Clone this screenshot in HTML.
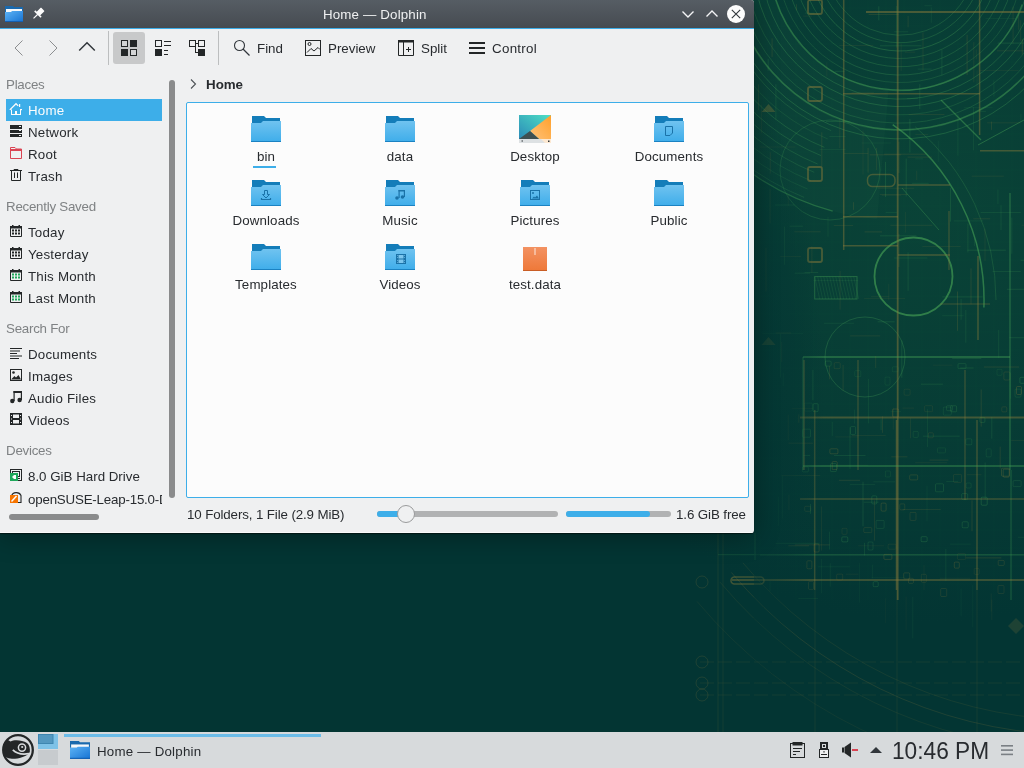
<!DOCTYPE html>
<html><head><meta charset="utf-8">
<style>
*{box-sizing:border-box}
html,body{margin:0;padding:0}
body{width:1024px;height:768px;overflow:hidden;position:relative;background:#033533;font-family:"Liberation Sans",sans-serif;}
.a{position:absolute}
.t{position:absolute;font-family:"Liberation Sans",sans-serif;font-size:13.333px;line-height:16px;white-space:nowrap;color:#282b2f;will-change:transform}
svg{position:absolute;overflow:visible}
#win{position:absolute;left:0;top:0;width:754px;height:533px;background:#eff0f1;border-radius:0 3px 3px 0;overflow:hidden;box-shadow:0 1px 1px rgba(0,0,0,0.5),0 4px 26px rgba(0,0,0,0.32)}
.si{letter-spacing:0.2px}
#title{position:absolute;left:0;top:0;width:754px;height:28px;background:linear-gradient(#565d64,#464b51)}
.hdr{color:#7f8284;letter-spacing:-0.25px;margin-top:0.5px}
.lbl{text-align:center;width:130px;letter-spacing:0.12px}
</style></head><body>
<!-- WALLPAPER -->
<svg id="wp" width="1024" height="732" style="left:0;top:0;position:absolute" viewBox="0 0 1024 732">
<defs><radialGradient id="wpg" cx="930" cy="200" r="470" gradientUnits="userSpaceOnUse">
<stop offset="0" stop-color="#0a4337"/><stop offset="0.5" stop-color="#073c35"/><stop offset="0.9" stop-color="#033533"/></radialGradient></defs>
<rect width="1024" height="732" fill="url(#wpg)"/>
<path d="M888.7,89.5 L877.3,219.0 A260,260 0 0 1 641.0,-17.3 L770.5,-28.7 A130,130 0 0 0 888.7,89.5 Z" fill="#4aa55a" opacity="0.05"/>
<path d="M974.7,-33.5 A75,75 0 0 1 825.0,-37.4" fill="none" stroke="#45a055" stroke-width="0.8" opacity="0.34"/>
<path d="M982.7,-32.8 A83,83 0 0 1 817.1,-37.1" fill="none" stroke="#45a055" stroke-width="0.8" opacity="0.36"/>
<path d="M990.7,-32.1 A91,91 0 0 1 809.1,-36.8" fill="none" stroke="#45a055" stroke-width="0.8" opacity="0.43"/>
<path d="M998.6,-31.4 A99,99 0 0 1 801.1,-36.5" fill="none" stroke="#45a055" stroke-width="0.8" opacity="0.34"/>
<path d="M1006.6,-30.7 A107,107 0 0 1 793.1,-36.3" fill="none" stroke="#45a055" stroke-width="0.8" opacity="0.35"/>
<path d="M1014.6,-30.0 A115,115 0 0 1 785.1,-36.0" fill="none" stroke="#45a055" stroke-width="0.8" opacity="0.37"/>
<path d="M1022.5,-29.3 A123,123 0 0 1 777.1,-35.7" fill="none" stroke="#45a055" stroke-width="0.8" opacity="0.29"/>
<path d="M1030.5,-28.6 A131,131 0 0 1 769.1,-35.4" fill="none" stroke="#45a055" stroke-width="0.8" opacity="0.35"/>
<path d="M1038.5,-27.9 A139,139 0 0 1 761.1,-35.1" fill="none" stroke="#45a055" stroke-width="0.8" opacity="0.38"/>
<path d="M1046.4,-27.2 A147,147 0 0 1 753.1,-34.9" fill="none" stroke="#45a055" stroke-width="0.8" opacity="0.41"/>
<path d="M1054.4,-26.5 A155,155 0 0 1 745.1,-34.6" fill="none" stroke="#45a055" stroke-width="0.8" opacity="0.27"/>
<path d="M1062.4,-25.8 A163,163 0 0 1 737.1,-34.3" fill="none" stroke="#45a055" stroke-width="0.8" opacity="0.31"/>
<path d="M1070.3,-25.1 A171,171 0 0 1 729.1,-34.0" fill="none" stroke="#45a055" stroke-width="0.8" opacity="0.27"/>
<path d="M1078.3,-24.4 A179,179 0 0 1 721.1,-33.8" fill="none" stroke="#45a055" stroke-width="0.8" opacity="0.41"/>
<path d="M831.1,130.6 A184,184 0 0 1 716.1,-33.6" fill="none" stroke="#45a055" stroke-width="0.8" opacity="0.30"/>
<path d="M827.7,138.9 A193,193 0 0 1 707.1,-33.3" fill="none" stroke="#45a055" stroke-width="0.8" opacity="0.21"/>
<path d="M824.3,147.3 A202,202 0 0 1 698.1,-33.0" fill="none" stroke="#45a055" stroke-width="0.8" opacity="0.35"/>
<path d="M821.0,155.6 A211,211 0 0 1 689.1,-32.6" fill="none" stroke="#45a055" stroke-width="0.8" opacity="0.34"/>
<path d="M817.6,164.0 A220,220 0 0 1 680.1,-32.3" fill="none" stroke="#45a055" stroke-width="0.8" opacity="0.30"/>
<path d="M814.2,172.3 A229,229 0 0 1 671.1,-32.0" fill="none" stroke="#45a055" stroke-width="0.8" opacity="0.29"/>
<path d="M810.8,180.7 A238,238 0 0 1 662.1,-31.7" fill="none" stroke="#45a055" stroke-width="0.8" opacity="0.22"/>
<path d="M807.5,189.0 A247,247 0 0 1 653.2,-31.4" fill="none" stroke="#45a055" stroke-width="0.8" opacity="0.20"/>
<path d="M804.1,197.4 A256,256 0 0 1 644.2,-31.1" fill="none" stroke="#45a055" stroke-width="0.8" opacity="0.28"/>
<path d="M1022.2,4.5 A130,130 0 0 1 770.1,-35.5" fill="none" stroke="#45a055" stroke-width="1.3" opacity="0.50"/>
<path d="M1059.7,18.1 A170,170 0 0 1 730.1,-34.1" fill="none" stroke="#45a055" stroke-width="1.3" opacity="0.50"/>
<path d="M832.7,211.1 A260,260 0 0 1 640.2,-30.9" fill="none" stroke="#45a055" stroke-width="1.3" opacity="0.45"/>
<path d="M892.7,124.7 A214,214 0 0 1 983.9,307.5" fill="none" stroke="#45a055" stroke-width="1.5" opacity="0.60"/>
<path d="M915.3,126.9 A226,226 0 0 1 996.0,300.0" fill="none" stroke="#45a055" stroke-width="0.8" opacity="0.30"/>
<circle cx="913.5" cy="276.5" r="39" fill="none" stroke="#45a055" stroke-width="1.8" opacity="0.65"/>
<circle cx="865" cy="357" r="40" fill="none" stroke="#45a055" stroke-width="1" opacity="0.30"/>
<circle cx="830" cy="170" r="50" fill="none" stroke="#45a055" stroke-width="1" opacity="0.25"/>
<line x1="843.7" y1="0.0" x2="843.7" y2="250.0" stroke="#8a7a3a" stroke-width="1.5" opacity="0.45"/>
<line x1="897.7" y1="0.0" x2="897.7" y2="600.0" stroke="#8a7a3a" stroke-width="1.8" opacity="0.50"/>
<line x1="979.6" y1="0.0" x2="979.6" y2="135.0" stroke="#8a7a3a" stroke-width="1.5" opacity="0.45"/>
<line x1="978.0" y1="256.0" x2="978.0" y2="340.0" stroke="#8a7a3a" stroke-width="1.5" opacity="0.45"/>
<line x1="949.0" y1="211.0" x2="949.0" y2="270.0" stroke="#8a7a3a" stroke-width="1.2" opacity="0.40"/>
<line x1="804.0" y1="360.0" x2="804.0" y2="470.0" stroke="#8a7a3a" stroke-width="1.5" opacity="0.45"/>
<line x1="814.7" y1="410.0" x2="814.7" y2="590.0" stroke="#8a7a3a" stroke-width="1.5" opacity="0.35"/>
<line x1="858.0" y1="360.0" x2="858.0" y2="470.0" stroke="#8a7a3a" stroke-width="1.2" opacity="0.40"/>
<line x1="896.5" y1="420.0" x2="896.5" y2="590.0" stroke="#8a7a3a" stroke-width="1.5" opacity="0.45"/>
<line x1="965.0" y1="370.0" x2="965.0" y2="500.0" stroke="#8a7a3a" stroke-width="1.2" opacity="0.40"/>
<line x1="977.0" y1="420.0" x2="977.0" y2="590.0" stroke="#8a7a3a" stroke-width="1.5" opacity="0.40"/>
<line x1="815.0" y1="590.0" x2="815.0" y2="732.0" stroke="#8a7a3a" stroke-width="1" opacity="0.12"/>
<line x1="897.0" y1="590.0" x2="897.0" y2="732.0" stroke="#8a7a3a" stroke-width="1" opacity="0.12"/>
<line x1="977.0" y1="590.0" x2="977.0" y2="732.0" stroke="#8a7a3a" stroke-width="1" opacity="0.12"/>
<line x1="1010.0" y1="193.0" x2="1010.0" y2="470.0" stroke="#45a055" stroke-width="1.3" opacity="0.45"/>
<line x1="803.0" y1="357.0" x2="803.0" y2="470.0" stroke="#45a055" stroke-width="1.3" opacity="0.35"/>
<line x1="1011.0" y1="470.0" x2="1011.0" y2="600.0" stroke="#45a055" stroke-width="1.3" opacity="0.30"/>
<line x1="866.0" y1="11.9" x2="1024.0" y2="11.9" stroke="#8a7a3a" stroke-width="2" opacity="0.50"/>
<line x1="843.0" y1="93.7" x2="980.0" y2="93.7" stroke="#8a7a3a" stroke-width="1.5" opacity="0.45"/>
<line x1="980.0" y1="150.8" x2="1024.0" y2="150.8" stroke="#8a7a3a" stroke-width="1.5" opacity="0.45"/>
<line x1="898.0" y1="185.0" x2="950.0" y2="185.0" stroke="#8a7a3a" stroke-width="1.5" opacity="0.45"/>
<line x1="843.0" y1="216.7" x2="898.0" y2="216.7" stroke="#8a7a3a" stroke-width="1.5" opacity="0.45"/>
<line x1="843.0" y1="245.8" x2="898.0" y2="245.8" stroke="#8a7a3a" stroke-width="1.5" opacity="0.45"/>
<line x1="898.0" y1="255.0" x2="950.0" y2="255.0" stroke="#8a7a3a" stroke-width="1.5" opacity="0.45"/>
<line x1="940.0" y1="304.0" x2="990.0" y2="304.0" stroke="#8a7a3a" stroke-width="1.2" opacity="0.40"/>
<line x1="800.0" y1="417.5" x2="1024.0" y2="417.5" stroke="#8a7a3a" stroke-width="1.8" opacity="0.45"/>
<line x1="800.0" y1="499.0" x2="1024.0" y2="499.0" stroke="#8a7a3a" stroke-width="1.5" opacity="0.40"/>
<line x1="732.0" y1="580.0" x2="1024.0" y2="580.0" stroke="#8a7a3a" stroke-width="2" opacity="0.40"/>
<line x1="803.0" y1="357.0" x2="1010.0" y2="357.0" stroke="#45a055" stroke-width="1.5" opacity="0.55"/>
<line x1="803.0" y1="466.0" x2="1024.0" y2="466.0" stroke="#45a055" stroke-width="1.5" opacity="0.50"/>
<line x1="760.0" y1="555.0" x2="1024.0" y2="555.0" stroke="#45a055" stroke-width="1" opacity="0.25"/>
<line x1="700" y1="662" x2="1024" y2="662" stroke="#8a7a3a" stroke-width="0.8" stroke-dasharray="14,4" opacity="0.15"/>
<line x1="700" y1="683" x2="1024" y2="683" stroke="#8a7a3a" stroke-width="0.8" stroke-dasharray="14,4" opacity="0.15"/>
<line x1="700" y1="695" x2="1024" y2="695" stroke="#8a7a3a" stroke-width="0.8" stroke-dasharray="14,4" opacity="0.15"/>
<circle cx="702" cy="582" r="6" fill="none" stroke="#8a7a3a" stroke-width="1" opacity="0.20"/>
<circle cx="702" cy="662" r="6" fill="none" stroke="#8a7a3a" stroke-width="1" opacity="0.20"/>
<circle cx="702" cy="683" r="6" fill="none" stroke="#8a7a3a" stroke-width="1" opacity="0.20"/>
<circle cx="702" cy="695" r="6" fill="none" stroke="#8a7a3a" stroke-width="1" opacity="0.20"/>
<path d="M742.9,562.8 A440,440 0 0 0 1064.6,719.7" fill="none" stroke="#8a7a3a" stroke-width="1" opacity="0.14"/>
<path d="M731.4,572.5 A455,455 0 0 0 1064.1,734.7" fill="none" stroke="#8a7a3a" stroke-width="1" opacity="0.20"/>
<path d="M720.0,582.1 A470,470 0 0 0 1063.6,749.7" fill="none" stroke="#8a7a3a" stroke-width="1" opacity="0.12"/>
<path d="M697.0,601.4 A500,500 0 0 0 1062.6,779.7" fill="none" stroke="#8a7a3a" stroke-width="1" opacity="0.10"/>
<line x1="718.0" y1="533.0" x2="718.0" y2="732.0" stroke="#8a7a3a" stroke-width="0.8" opacity="0.18"/>
<line x1="723.0" y1="533.0" x2="723.0" y2="732.0" stroke="#8a7a3a" stroke-width="0.8" opacity="0.15"/>
<line x1="755.0" y1="533.0" x2="755.0" y2="560.0" stroke="#45a055" stroke-width="1" opacity="0.30"/>
<line x1="718.0" y1="554.7" x2="1024.0" y2="554.7" stroke="#45a055" stroke-width="0.9" opacity="0.22"/>
<rect x="731.0" y="577.0" width="33.0" height="7.0" rx="3.5" fill="none" stroke="#8a7a3a" stroke-width="1.6" opacity="0.45"/>
<line x1="941.0" y1="100.0" x2="981.0" y2="140.0" stroke="#45a055" stroke-width="1.2" opacity="0.50"/>
<line x1="978.0" y1="145.0" x2="1024.0" y2="120.0" stroke="#45a055" stroke-width="1" opacity="0.45"/>
<line x1="902.0" y1="188.0" x2="939.0" y2="230.0" stroke="#45a055" stroke-width="1" opacity="0.35"/>
<rect x="808.0" y="87.0" width="14.0" height="14.0" rx="2" fill="none" stroke="#8a7a3a" stroke-width="1.8" opacity="0.50"/>
<rect x="808.0" y="167.0" width="14.0" height="14.0" rx="2" fill="none" stroke="#8a7a3a" stroke-width="1.8" opacity="0.50"/>
<rect x="808.0" y="248.0" width="14.0" height="14.0" rx="2" fill="none" stroke="#8a7a3a" stroke-width="1.8" opacity="0.50"/>
<rect x="808.0" y="0.0" width="14.0" height="14.0" rx="2" fill="none" stroke="#8a7a3a" stroke-width="1.8" opacity="0.50"/>
<rect x="867.5" y="174.6" width="27.5" height="12.0" rx="5" fill="none" stroke="#8a7a3a" stroke-width="1.5" opacity="0.45"/>
<rect x="814.7" y="276.6" width="42.3" height="22.4" rx="0" fill="none" stroke="#45a055" stroke-width="1" opacity="0.45"/>
<line x1="814.7" y1="276.6" x2="819.7" y2="299.0" stroke="#45a055" stroke-width="0.6" opacity="0.25"/>
<line x1="817.7" y1="276.6" x2="822.7" y2="299.0" stroke="#45a055" stroke-width="0.6" opacity="0.25"/>
<line x1="820.7" y1="276.6" x2="825.7" y2="299.0" stroke="#45a055" stroke-width="0.6" opacity="0.25"/>
<line x1="823.7" y1="276.6" x2="828.7" y2="299.0" stroke="#45a055" stroke-width="0.6" opacity="0.25"/>
<line x1="826.7" y1="276.6" x2="831.7" y2="299.0" stroke="#45a055" stroke-width="0.6" opacity="0.25"/>
<line x1="829.7" y1="276.6" x2="834.7" y2="299.0" stroke="#45a055" stroke-width="0.6" opacity="0.25"/>
<line x1="832.7" y1="276.6" x2="837.7" y2="299.0" stroke="#45a055" stroke-width="0.6" opacity="0.25"/>
<line x1="835.7" y1="276.6" x2="840.7" y2="299.0" stroke="#45a055" stroke-width="0.6" opacity="0.25"/>
<line x1="838.7" y1="276.6" x2="843.7" y2="299.0" stroke="#45a055" stroke-width="0.6" opacity="0.25"/>
<line x1="841.7" y1="276.6" x2="846.7" y2="299.0" stroke="#45a055" stroke-width="0.6" opacity="0.25"/>
<line x1="844.7" y1="276.6" x2="849.7" y2="299.0" stroke="#45a055" stroke-width="0.6" opacity="0.25"/>
<line x1="847.7" y1="276.6" x2="852.7" y2="299.0" stroke="#45a055" stroke-width="0.6" opacity="0.25"/>
<line x1="850.7" y1="276.6" x2="855.7" y2="299.0" stroke="#45a055" stroke-width="0.6" opacity="0.25"/>
<line x1="853.7" y1="276.6" x2="858.7" y2="299.0" stroke="#45a055" stroke-width="0.6" opacity="0.25"/>
<path d="M1008,626 L1016,618 L1024,626 L1016,634 Z" fill="#8a7a3a" opacity="0.2"/>
<path d="M761.5,112 L768.5,104 L775.5,112 Z" fill="#8a7a3a" opacity="0.35"/>
<path d="M761.5,345 L768.5,337 L775.5,345 Z" fill="#8a7a3a" opacity="0.35"/>
<rect x="813.1" y="403.7" width="5.0" height="8.0" rx="1" fill="none" stroke="#45a055" stroke-width="0.8" opacity="0.31"/>
<rect x="871.8" y="495.9" width="5.0" height="8.0" rx="1" fill="none" stroke="#45a055" stroke-width="0.8" opacity="0.28"/>
<rect x="910.0" y="512.4" width="6.0" height="8.0" rx="1" fill="none" stroke="#8a7a3a" stroke-width="0.8" opacity="0.23"/>
<rect x="921.3" y="574.3" width="5.0" height="8.0" rx="1" fill="none" stroke="#8a7a3a" stroke-width="0.8" opacity="0.21"/>
<rect x="850.5" y="426.5" width="5.0" height="8.0" rx="1" fill="none" stroke="#45a055" stroke-width="0.8" opacity="0.23"/>
<rect x="986.2" y="448.9" width="5.0" height="8.0" rx="1" fill="none" stroke="#45a055" stroke-width="0.8" opacity="0.19"/>
<rect x="1003.9" y="372.0" width="6.0" height="8.0" rx="1" fill="none" stroke="#8a7a3a" stroke-width="0.8" opacity="0.23"/>
<rect x="924.6" y="405.7" width="8.0" height="6.0" rx="1" fill="none" stroke="#8a7a3a" stroke-width="0.8" opacity="0.17"/>
<rect x="873.2" y="581.7" width="5.0" height="5.0" rx="1" fill="none" stroke="#45a055" stroke-width="0.8" opacity="0.29"/>
<rect x="802.4" y="466.9" width="6.0" height="5.0" rx="1" fill="none" stroke="#45a055" stroke-width="0.8" opacity="0.24"/>
<rect x="842.0" y="528.3" width="5.0" height="6.0" rx="1" fill="none" stroke="#8a7a3a" stroke-width="0.8" opacity="0.17"/>
<rect x="892.6" y="409.0" width="6.0" height="8.0" rx="1" fill="none" stroke="#8a7a3a" stroke-width="0.8" opacity="0.35"/>
<rect x="804.3" y="403.1" width="8.0" height="8.0" rx="1" fill="none" stroke="#45a055" stroke-width="0.8" opacity="0.16"/>
<rect x="832.2" y="461.6" width="5.0" height="8.0" rx="1" fill="none" stroke="#8a7a3a" stroke-width="0.8" opacity="0.32"/>
<rect x="885.0" y="377.1" width="5.0" height="8.0" rx="1" fill="none" stroke="#45a055" stroke-width="0.8" opacity="0.15"/>
<rect x="881.1" y="503.1" width="5.0" height="8.0" rx="1" fill="none" stroke="#8a7a3a" stroke-width="0.8" opacity="0.32"/>
<rect x="829.9" y="448.8" width="8.0" height="5.0" rx="1" fill="none" stroke="#8a7a3a" stroke-width="0.8" opacity="0.33"/>
<rect x="979.9" y="417.4" width="5.0" height="5.0" rx="1" fill="none" stroke="#45a055" stroke-width="0.8" opacity="0.29"/>
<rect x="885.4" y="471.0" width="5.0" height="6.0" rx="1" fill="none" stroke="#45a055" stroke-width="0.8" opacity="0.17"/>
<rect x="808.5" y="581.4" width="5.0" height="8.0" rx="1" fill="none" stroke="#8a7a3a" stroke-width="0.8" opacity="0.20"/>
<rect x="981.2" y="497.2" width="6.0" height="8.0" rx="1" fill="none" stroke="#45a055" stroke-width="0.8" opacity="0.34"/>
<rect x="1015.0" y="389.1" width="6.0" height="8.0" rx="1" fill="none" stroke="#45a055" stroke-width="0.8" opacity="0.21"/>
<rect x="1001.8" y="406.9" width="5.0" height="5.0" rx="1" fill="none" stroke="#8a7a3a" stroke-width="0.8" opacity="0.23"/>
<rect x="854.8" y="370.7" width="6.0" height="6.0" rx="1" fill="none" stroke="#45a055" stroke-width="0.8" opacity="0.17"/>
<rect x="830.4" y="463.6" width="6.0" height="8.0" rx="1" fill="none" stroke="#45a055" stroke-width="0.8" opacity="0.27"/>
<rect x="1003.2" y="469.2" width="6.0" height="8.0" rx="1" fill="none" stroke="#8a7a3a" stroke-width="0.8" opacity="0.34"/>
<rect x="804.7" y="506.3" width="6.0" height="5.0" rx="1" fill="none" stroke="#8a7a3a" stroke-width="0.8" opacity="0.21"/>
<rect x="1019.9" y="377.3" width="8.0" height="6.0" rx="1" fill="none" stroke="#45a055" stroke-width="0.8" opacity="0.33"/>
<rect x="962.2" y="521.8" width="6.0" height="6.0" rx="1" fill="none" stroke="#45a055" stroke-width="0.8" opacity="0.29"/>
<rect x="998.2" y="560.4" width="6.0" height="5.0" rx="1" fill="none" stroke="#8a7a3a" stroke-width="0.8" opacity="0.26"/>
<rect x="937.5" y="447.9" width="8.0" height="5.0" rx="1" fill="none" stroke="#45a055" stroke-width="0.8" opacity="0.17"/>
<rect x="940.7" y="588.5" width="6.0" height="8.0" rx="1" fill="none" stroke="#8a7a3a" stroke-width="0.8" opacity="0.23"/>
<rect x="961.7" y="493.6" width="6.0" height="6.0" rx="1" fill="none" stroke="#45a055" stroke-width="0.8" opacity="0.25"/>
<rect x="913.2" y="431.4" width="5.0" height="6.0" rx="1" fill="none" stroke="#45a055" stroke-width="0.8" opacity="0.20"/>
<rect x="953.6" y="474.4" width="8.0" height="8.0" rx="1" fill="none" stroke="#8a7a3a" stroke-width="0.8" opacity="0.20"/>
<rect x="802.5" y="429.2" width="8.0" height="8.0" rx="1" fill="none" stroke="#45a055" stroke-width="0.8" opacity="0.25"/>
<rect x="965.8" y="438.8" width="6.0" height="6.0" rx="1" fill="none" stroke="#45a055" stroke-width="0.8" opacity="0.22"/>
<rect x="946.5" y="405.7" width="6.0" height="5.0" rx="1" fill="none" stroke="#45a055" stroke-width="0.8" opacity="0.23"/>
<rect x="928.3" y="432.8" width="5.0" height="5.0" rx="1" fill="none" stroke="#8a7a3a" stroke-width="0.8" opacity="0.22"/>
<rect x="997.0" y="369.3" width="5.0" height="6.0" rx="1" fill="none" stroke="#45a055" stroke-width="0.8" opacity="0.17"/>
<rect x="903.7" y="572.9" width="6.0" height="6.0" rx="1" fill="none" stroke="#8a7a3a" stroke-width="0.8" opacity="0.28"/>
<rect x="957.6" y="553.6" width="8.0" height="6.0" rx="1" fill="none" stroke="#8a7a3a" stroke-width="0.8" opacity="0.16"/>
<rect x="806.9" y="560.8" width="5.0" height="8.0" rx="1" fill="none" stroke="#8a7a3a" stroke-width="0.8" opacity="0.26"/>
<rect x="868.0" y="542.0" width="5.0" height="8.0" rx="1" fill="none" stroke="#45a055" stroke-width="0.8" opacity="0.23"/>
<rect x="841.8" y="536.9" width="6.0" height="5.0" rx="1" fill="none" stroke="#45a055" stroke-width="0.8" opacity="0.31"/>
<rect x="1016.5" y="386.5" width="5.0" height="8.0" rx="1" fill="none" stroke="#8a7a3a" stroke-width="0.8" opacity="0.34"/>
<rect x="950.6" y="405.8" width="6.0" height="6.0" rx="1" fill="none" stroke="#45a055" stroke-width="0.8" opacity="0.29"/>
<rect x="966.1" y="483.0" width="5.0" height="5.0" rx="1" fill="none" stroke="#45a055" stroke-width="0.8" opacity="0.20"/>
<rect x="876.1" y="520.4" width="8.0" height="8.0" rx="1" fill="none" stroke="#45a055" stroke-width="0.8" opacity="0.23"/>
<rect x="974.2" y="568.4" width="5.0" height="6.0" rx="1" fill="none" stroke="#8a7a3a" stroke-width="0.8" opacity="0.18"/>
<rect x="899.8" y="503.9" width="5.0" height="6.0" rx="1" fill="none" stroke="#8a7a3a" stroke-width="0.8" opacity="0.24"/>
<rect x="943.3" y="407.1" width="8.0" height="8.0" rx="1" fill="none" stroke="#45a055" stroke-width="0.8" opacity="0.19"/>
<rect x="998.0" y="585.5" width="6.0" height="8.0" rx="1" fill="none" stroke="#8a7a3a" stroke-width="0.8" opacity="0.20"/>
<rect x="958.0" y="363.6" width="8.0" height="5.0" rx="1" fill="none" stroke="#45a055" stroke-width="0.8" opacity="0.24"/>
<rect x="921.1" y="536.7" width="6.0" height="5.0" rx="1" fill="none" stroke="#45a055" stroke-width="0.8" opacity="0.31"/>
<rect x="814.1" y="544.0" width="5.0" height="8.0" rx="1" fill="none" stroke="#8a7a3a" stroke-width="0.8" opacity="0.29"/>
<rect x="1001.5" y="468.2" width="8.0" height="8.0" rx="1" fill="none" stroke="#8a7a3a" stroke-width="0.8" opacity="0.34"/>
<rect x="908.4" y="578.3" width="5.0" height="5.0" rx="1" fill="none" stroke="#8a7a3a" stroke-width="0.8" opacity="0.26"/>
<rect x="863.8" y="527.6" width="8.0" height="5.0" rx="1" fill="none" stroke="#8a7a3a" stroke-width="0.8" opacity="0.21"/>
<rect x="883.9" y="554.4" width="8.0" height="5.0" rx="1" fill="none" stroke="#8a7a3a" stroke-width="0.8" opacity="0.32"/>
<rect x="1013.1" y="480.6" width="8.0" height="6.0" rx="1" fill="none" stroke="#45a055" stroke-width="0.8" opacity="0.23"/>
<rect x="825.1" y="361.1" width="6.0" height="5.0" rx="1" fill="none" stroke="#45a055" stroke-width="0.8" opacity="0.25"/>
<rect x="888.1" y="544.2" width="8.0" height="5.0" rx="1" fill="none" stroke="#8a7a3a" stroke-width="0.8" opacity="0.17"/>
<rect x="836.7" y="574.1" width="6.0" height="6.0" rx="1" fill="none" stroke="#8a7a3a" stroke-width="0.8" opacity="0.20"/>
<rect x="904.1" y="389.2" width="6.0" height="6.0" rx="1" fill="none" stroke="#8a7a3a" stroke-width="0.8" opacity="0.17"/>
<rect x="892.3" y="366.8" width="6.0" height="5.0" rx="1" fill="none" stroke="#45a055" stroke-width="0.8" opacity="0.16"/>
<rect x="834.2" y="362.7" width="6.0" height="6.0" rx="1" fill="none" stroke="#8a7a3a" stroke-width="0.8" opacity="0.20"/>
<rect x="909.7" y="474.9" width="8.0" height="5.0" rx="1" fill="none" stroke="#8a7a3a" stroke-width="0.8" opacity="0.29"/>
<rect x="954.3" y="562.1" width="5.0" height="6.0" rx="1" fill="none" stroke="#8a7a3a" stroke-width="0.8" opacity="0.32"/>
<rect x="935.5" y="483.8" width="8.0" height="8.0" rx="1" fill="none" stroke="#45a055" stroke-width="0.8" opacity="0.26"/>
<line x1="984.1" y1="367.0" x2="1019.0" y2="367.0" stroke="#8a7a3a" stroke-width="0.7" opacity="0.27"/>
<line x1="997.9" y1="189.5" x2="997.9" y2="204.0" stroke="#45a055" stroke-width="0.7" opacity="0.18"/>
<line x1="993.9" y1="80.4" x2="993.9" y2="96.5" stroke="#45a055" stroke-width="0.7" opacity="0.16"/>
<line x1="872.5" y1="564.7" x2="872.5" y2="578.5" stroke="#45a055" stroke-width="0.7" opacity="0.11"/>
<line x1="781.7" y1="341.9" x2="781.7" y2="362.0" stroke="#8a7a3a" stroke-width="0.7" opacity="0.18"/>
<line x1="890.7" y1="411.4" x2="900.9" y2="411.4" stroke="#45a055" stroke-width="0.7" opacity="0.15"/>
<line x1="960.2" y1="368.0" x2="973.6" y2="368.0" stroke="#45a055" stroke-width="0.7" opacity="0.28"/>
<line x1="810.6" y1="504.1" x2="810.6" y2="513.8" stroke="#45a055" stroke-width="0.7" opacity="0.30"/>
<line x1="792.0" y1="408.6" x2="813.3" y2="408.6" stroke="#8a7a3a" stroke-width="0.7" opacity="0.13"/>
<line x1="894.1" y1="258.0" x2="927.4" y2="258.0" stroke="#45a055" stroke-width="0.7" opacity="0.23"/>
<line x1="804.6" y1="272.4" x2="818.2" y2="272.4" stroke="#45a055" stroke-width="0.7" opacity="0.25"/>
<line x1="781.4" y1="475.4" x2="820.2" y2="475.4" stroke="#8a7a3a" stroke-width="0.7" opacity="0.18"/>
<line x1="908.7" y1="114.6" x2="944.4" y2="114.6" stroke="#8a7a3a" stroke-width="0.7" opacity="0.23"/>
<line x1="1000.2" y1="446.7" x2="1000.2" y2="468.5" stroke="#8a7a3a" stroke-width="0.7" opacity="0.26"/>
<line x1="991.8" y1="416.9" x2="991.8" y2="438.7" stroke="#45a055" stroke-width="0.7" opacity="0.26"/>
<line x1="774.9" y1="205.0" x2="794.8" y2="205.0" stroke="#45a055" stroke-width="0.7" opacity="0.20"/>
<line x1="818.2" y1="566.8" x2="849.9" y2="566.8" stroke="#45a055" stroke-width="0.7" opacity="0.12"/>
<line x1="898.9" y1="233.8" x2="898.9" y2="267.1" stroke="#8a7a3a" stroke-width="0.7" opacity="0.30"/>
<line x1="1018.7" y1="13.7" x2="1018.7" y2="29.7" stroke="#8a7a3a" stroke-width="0.7" opacity="0.23"/>
<line x1="891.3" y1="456.8" x2="907.4" y2="456.8" stroke="#8a7a3a" stroke-width="0.7" opacity="0.24"/>
<line x1="998.7" y1="330.0" x2="998.7" y2="358.2" stroke="#45a055" stroke-width="0.7" opacity="0.21"/>
<line x1="927.0" y1="485.7" x2="927.0" y2="521.3" stroke="#45a055" stroke-width="0.7" opacity="0.13"/>
<line x1="859.6" y1="563.2" x2="859.6" y2="602.5" stroke="#45a055" stroke-width="0.7" opacity="0.09"/>
<line x1="871.1" y1="296.7" x2="889.3" y2="296.7" stroke="#8a7a3a" stroke-width="0.7" opacity="0.17"/>
<line x1="885.5" y1="161.9" x2="885.5" y2="197.0" stroke="#45a055" stroke-width="0.7" opacity="0.29"/>
<line x1="759.8" y1="147.0" x2="795.2" y2="147.0" stroke="#8a7a3a" stroke-width="0.7" opacity="0.13"/>
<line x1="770.1" y1="189.1" x2="770.1" y2="223.3" stroke="#8a7a3a" stroke-width="0.7" opacity="0.19"/>
<line x1="775.7" y1="543.3" x2="819.7" y2="543.3" stroke="#45a055" stroke-width="0.7" opacity="0.20"/>
<line x1="768.2" y1="59.1" x2="768.2" y2="70.7" stroke="#45a055" stroke-width="0.7" opacity="0.27"/>
<line x1="917.8" y1="69.1" x2="931.7" y2="69.1" stroke="#45a055" stroke-width="0.7" opacity="0.23"/>
<line x1="851.6" y1="92.8" x2="873.9" y2="92.8" stroke="#8a7a3a" stroke-width="0.7" opacity="0.19"/>
<line x1="927.4" y1="409.2" x2="927.4" y2="447.0" stroke="#45a055" stroke-width="0.7" opacity="0.19"/>
<line x1="1011.3" y1="440.6" x2="1052.1" y2="440.6" stroke="#8a7a3a" stroke-width="0.7" opacity="0.16"/>
<line x1="829.6" y1="365.9" x2="829.6" y2="379.3" stroke="#8a7a3a" stroke-width="0.7" opacity="0.25"/>
<line x1="957.9" y1="113.9" x2="957.9" y2="155.6" stroke="#45a055" stroke-width="0.7" opacity="0.16"/>
<line x1="924.4" y1="5.7" x2="931.9" y2="5.7" stroke="#45a055" stroke-width="0.7" opacity="0.17"/>
<line x1="901.2" y1="43.5" x2="901.2" y2="71.0" stroke="#8a7a3a" stroke-width="0.7" opacity="0.14"/>
<line x1="885.7" y1="212.5" x2="896.9" y2="212.5" stroke="#45a055" stroke-width="0.7" opacity="0.18"/>
<line x1="971.0" y1="268.4" x2="971.0" y2="304.4" stroke="#8a7a3a" stroke-width="0.7" opacity="0.27"/>
<line x1="869.7" y1="154.8" x2="901.2" y2="154.8" stroke="#8a7a3a" stroke-width="0.7" opacity="0.27"/>
<line x1="834.0" y1="455.4" x2="865.5" y2="455.4" stroke="#45a055" stroke-width="0.7" opacity="0.27"/>
<line x1="879.8" y1="194.5" x2="908.0" y2="194.5" stroke="#8a7a3a" stroke-width="0.7" opacity="0.22"/>
<line x1="836.1" y1="465.3" x2="867.9" y2="465.3" stroke="#45a055" stroke-width="0.7" opacity="0.13"/>
<line x1="942.3" y1="296.9" x2="982.7" y2="296.9" stroke="#45a055" stroke-width="0.7" opacity="0.26"/>
<line x1="851.9" y1="435.6" x2="885.6" y2="435.6" stroke="#8a7a3a" stroke-width="0.7" opacity="0.19"/>
<line x1="873.4" y1="481.8" x2="895.0" y2="481.8" stroke="#45a055" stroke-width="0.7" opacity="0.17"/>
<line x1="778.6" y1="497.1" x2="778.6" y2="525.9" stroke="#45a055" stroke-width="0.7" opacity="0.12"/>
<line x1="954.0" y1="220.9" x2="983.1" y2="220.9" stroke="#45a055" stroke-width="0.7" opacity="0.19"/>
<line x1="803.3" y1="455.4" x2="810.2" y2="455.4" stroke="#45a055" stroke-width="0.7" opacity="0.28"/>
<line x1="901.8" y1="340.5" x2="901.8" y2="377.8" stroke="#45a055" stroke-width="0.7" opacity="0.29"/>
<line x1="912.0" y1="183.3" x2="928.6" y2="183.3" stroke="#45a055" stroke-width="0.7" opacity="0.22"/>
<line x1="997.0" y1="50.8" x2="1032.0" y2="50.8" stroke="#8a7a3a" stroke-width="0.7" opacity="0.23"/>
<line x1="821.8" y1="132.3" x2="821.8" y2="168.1" stroke="#8a7a3a" stroke-width="0.7" opacity="0.26"/>
<line x1="849.9" y1="484.4" x2="875.0" y2="484.4" stroke="#45a055" stroke-width="0.7" opacity="0.18"/>
<line x1="945.8" y1="549.0" x2="945.8" y2="581.0" stroke="#45a055" stroke-width="0.7" opacity="0.19"/>
<line x1="972.0" y1="500.3" x2="972.0" y2="531.3" stroke="#8a7a3a" stroke-width="0.7" opacity="0.28"/>
<line x1="946.3" y1="481.4" x2="958.0" y2="481.4" stroke="#45a055" stroke-width="0.7" opacity="0.20"/>
<line x1="1021.6" y1="225.3" x2="1044.2" y2="225.3" stroke="#8a7a3a" stroke-width="0.7" opacity="0.15"/>
<line x1="829.4" y1="531.7" x2="829.4" y2="549.5" stroke="#45a055" stroke-width="0.7" opacity="0.20"/>
<line x1="964.0" y1="107.7" x2="992.7" y2="107.7" stroke="#45a055" stroke-width="0.7" opacity="0.13"/>
<line x1="839.8" y1="118.6" x2="839.8" y2="148.0" stroke="#8a7a3a" stroke-width="0.7" opacity="0.18"/>
<line x1="915.4" y1="134.4" x2="928.1" y2="134.4" stroke="#8a7a3a" stroke-width="0.7" opacity="0.15"/>
<line x1="924.0" y1="565.2" x2="924.0" y2="590.1" stroke="#8a7a3a" stroke-width="0.7" opacity="0.11"/>
<line x1="1001.0" y1="205.2" x2="1001.0" y2="230.1" stroke="#45a055" stroke-width="0.7" opacity="0.22"/>
<line x1="863.0" y1="130.5" x2="863.0" y2="174.5" stroke="#8a7a3a" stroke-width="0.7" opacity="0.14"/>
<line x1="967.1" y1="34.8" x2="967.1" y2="74.9" stroke="#8a7a3a" stroke-width="0.7" opacity="0.29"/>
<line x1="876.6" y1="147.9" x2="876.6" y2="170.1" stroke="#8a7a3a" stroke-width="0.7" opacity="0.20"/>
<line x1="794.8" y1="544.9" x2="829.7" y2="544.9" stroke="#8a7a3a" stroke-width="0.7" opacity="0.27"/>
<line x1="894.3" y1="31.8" x2="908.2" y2="31.8" stroke="#45a055" stroke-width="0.7" opacity="0.22"/>
<line x1="976.3" y1="49.5" x2="976.3" y2="59.2" stroke="#8a7a3a" stroke-width="0.7" opacity="0.17"/>
<line x1="941.9" y1="49.7" x2="941.9" y2="75.4" stroke="#45a055" stroke-width="0.7" opacity="0.25"/>
<line x1="967.5" y1="250.2" x2="1005.8" y2="250.2" stroke="#45a055" stroke-width="0.7" opacity="0.29"/>
<line x1="766.0" y1="247.9" x2="766.0" y2="291.5" stroke="#8a7a3a" stroke-width="0.7" opacity="0.21"/>
<line x1="839.3" y1="45.6" x2="873.2" y2="45.6" stroke="#8a7a3a" stroke-width="0.7" opacity="0.18"/>
<line x1="775.9" y1="84.3" x2="775.9" y2="119.5" stroke="#45a055" stroke-width="0.7" opacity="0.24"/>
<line x1="931.3" y1="7.4" x2="931.3" y2="22.7" stroke="#45a055" stroke-width="0.7" opacity="0.19"/>
<line x1="878.8" y1="6.3" x2="878.8" y2="20.3" stroke="#45a055" stroke-width="0.7" opacity="0.30"/>
<line x1="833.8" y1="225.6" x2="853.0" y2="225.6" stroke="#8a7a3a" stroke-width="0.7" opacity="0.22"/>
<line x1="904.9" y1="52.2" x2="915.2" y2="52.2" stroke="#8a7a3a" stroke-width="0.7" opacity="0.15"/>
<line x1="1009.3" y1="337.7" x2="1047.5" y2="337.7" stroke="#45a055" stroke-width="0.7" opacity="0.25"/>
<line x1="783.3" y1="373.0" x2="783.3" y2="386.0" stroke="#45a055" stroke-width="0.7" opacity="0.14"/>
<line x1="863.8" y1="502.2" x2="878.6" y2="502.2" stroke="#45a055" stroke-width="0.7" opacity="0.23"/>
<line x1="1020.6" y1="260.3" x2="1058.7" y2="260.3" stroke="#45a055" stroke-width="0.7" opacity="0.26"/>
<line x1="929.5" y1="460.1" x2="948.4" y2="460.1" stroke="#8a7a3a" stroke-width="0.7" opacity="0.27"/>
<line x1="923.0" y1="436.2" x2="959.7" y2="436.2" stroke="#45a055" stroke-width="0.7" opacity="0.23"/>
<line x1="932.9" y1="365.2" x2="952.3" y2="365.2" stroke="#8a7a3a" stroke-width="0.7" opacity="0.12"/>
<line x1="784.5" y1="226.6" x2="784.5" y2="264.7" stroke="#45a055" stroke-width="0.7" opacity="0.21"/>
<line x1="824.0" y1="323.3" x2="853.9" y2="323.3" stroke="#45a055" stroke-width="0.7" opacity="0.17"/>
<line x1="909.9" y1="118.9" x2="909.9" y2="152.5" stroke="#45a055" stroke-width="0.7" opacity="0.29"/>
<line x1="908.1" y1="16.0" x2="908.1" y2="27.3" stroke="#8a7a3a" stroke-width="0.7" opacity="0.24"/>
<line x1="910.5" y1="418.3" x2="910.5" y2="438.3" stroke="#8a7a3a" stroke-width="0.7" opacity="0.18"/>
<line x1="992.6" y1="271.4" x2="1020.8" y2="271.4" stroke="#45a055" stroke-width="0.7" opacity="0.25"/>
<line x1="906.2" y1="158.6" x2="906.2" y2="196.5" stroke="#45a055" stroke-width="0.7" opacity="0.28"/>
<line x1="788.9" y1="494.8" x2="788.9" y2="510.2" stroke="#8a7a3a" stroke-width="0.7" opacity="0.17"/>
<line x1="978.6" y1="111.3" x2="985.9" y2="111.3" stroke="#45a055" stroke-width="0.7" opacity="0.22"/>
<line x1="965.8" y1="557.9" x2="1001.3" y2="557.9" stroke="#8a7a3a" stroke-width="0.7" opacity="0.30"/>
<line x1="920.9" y1="384.2" x2="942.9" y2="384.2" stroke="#45a055" stroke-width="0.7" opacity="0.26"/>
<line x1="794.3" y1="231.8" x2="820.6" y2="231.8" stroke="#8a7a3a" stroke-width="0.7" opacity="0.22"/>
<line x1="821.4" y1="559.0" x2="821.4" y2="593.2" stroke="#45a055" stroke-width="0.7" opacity="0.13"/>
<line x1="864.1" y1="298.5" x2="905.0" y2="298.5" stroke="#8a7a3a" stroke-width="0.7" opacity="0.14"/>
<line x1="957.5" y1="291.5" x2="957.5" y2="330.8" stroke="#8a7a3a" stroke-width="0.7" opacity="0.30"/>
<line x1="977.1" y1="70.4" x2="977.1" y2="89.3" stroke="#8a7a3a" stroke-width="0.7" opacity="0.14"/>
<line x1="868.7" y1="14.5" x2="898.7" y2="14.5" stroke="#8a7a3a" stroke-width="0.7" opacity="0.28"/>
<line x1="952.2" y1="358.5" x2="981.3" y2="358.5" stroke="#45a055" stroke-width="0.7" opacity="0.26"/>
<line x1="821.5" y1="506.6" x2="821.5" y2="550.6" stroke="#8a7a3a" stroke-width="0.7" opacity="0.16"/>
<line x1="942.2" y1="315.7" x2="963.7" y2="315.7" stroke="#45a055" stroke-width="0.7" opacity="0.16"/>
<line x1="991.8" y1="599.6" x2="991.8" y2="619.9" stroke="#8a7a3a" stroke-width="0.7" opacity="0.13"/>
<line x1="907.1" y1="98.5" x2="917.9" y2="98.5" stroke="#45a055" stroke-width="0.7" opacity="0.24"/>
<line x1="782.4" y1="475.4" x2="782.4" y2="518.5" stroke="#45a055" stroke-width="0.7" opacity="0.14"/>
<line x1="835.4" y1="436.9" x2="858.5" y2="436.9" stroke="#8a7a3a" stroke-width="0.7" opacity="0.12"/>
<line x1="974.5" y1="238.4" x2="974.5" y2="246.1" stroke="#45a055" stroke-width="0.7" opacity="0.18"/>
<line x1="877.9" y1="188.3" x2="914.2" y2="188.3" stroke="#8a7a3a" stroke-width="0.7" opacity="0.18"/>
<line x1="991.5" y1="121.6" x2="991.5" y2="129.9" stroke="#8a7a3a" stroke-width="0.7" opacity="0.27"/>
<line x1="980.6" y1="212.5" x2="1020.9" y2="212.5" stroke="#45a055" stroke-width="0.7" opacity="0.21"/>
<line x1="898.9" y1="141.7" x2="898.9" y2="173.1" stroke="#8a7a3a" stroke-width="0.7" opacity="0.29"/>
<line x1="950.5" y1="187.8" x2="950.5" y2="221.6" stroke="#45a055" stroke-width="0.7" opacity="0.28"/>
<line x1="845.8" y1="574.2" x2="858.4" y2="574.2" stroke="#8a7a3a" stroke-width="0.7" opacity="0.13"/>
<line x1="788.3" y1="414.7" x2="788.3" y2="440.2" stroke="#8a7a3a" stroke-width="0.7" opacity="0.17"/>
<line x1="967.9" y1="223.5" x2="967.9" y2="252.5" stroke="#45a055" stroke-width="0.7" opacity="0.24"/>
<line x1="1017.9" y1="537.3" x2="1029.0" y2="537.3" stroke="#45a055" stroke-width="0.7" opacity="0.15"/>
<line x1="880.0" y1="45.8" x2="921.4" y2="45.8" stroke="#45a055" stroke-width="0.7" opacity="0.29"/>
<line x1="916.7" y1="170.7" x2="916.7" y2="180.1" stroke="#8a7a3a" stroke-width="0.7" opacity="0.17"/>
<line x1="1020.9" y1="113.7" x2="1020.9" y2="120.8" stroke="#45a055" stroke-width="0.7" opacity="0.15"/>
<line x1="1020.7" y1="20.2" x2="1020.7" y2="41.2" stroke="#8a7a3a" stroke-width="0.7" opacity="0.20"/>
<line x1="772.1" y1="38.4" x2="772.1" y2="56.9" stroke="#8a7a3a" stroke-width="0.7" opacity="0.26"/>
<line x1="965.8" y1="310.0" x2="965.8" y2="342.7" stroke="#45a055" stroke-width="0.7" opacity="0.21"/>
<line x1="915.2" y1="462.7" x2="947.2" y2="462.7" stroke="#8a7a3a" stroke-width="0.7" opacity="0.14"/>
<line x1="966.8" y1="474.7" x2="981.4" y2="474.7" stroke="#8a7a3a" stroke-width="0.7" opacity="0.16"/>
<line x1="826.0" y1="121.5" x2="849.5" y2="121.5" stroke="#45a055" stroke-width="0.7" opacity="0.29"/>
<line x1="843.1" y1="365.0" x2="843.1" y2="390.6" stroke="#8a7a3a" stroke-width="0.7" opacity="0.23"/>
<line x1="985.6" y1="18.6" x2="1016.5" y2="18.6" stroke="#45a055" stroke-width="0.7" opacity="0.14"/>
<line x1="923.0" y1="32.4" x2="923.0" y2="70.4" stroke="#8a7a3a" stroke-width="0.7" opacity="0.20"/>
<line x1="961.1" y1="299.0" x2="961.1" y2="319.8" stroke="#45a055" stroke-width="0.7" opacity="0.24"/>
<line x1="798.8" y1="414.4" x2="798.8" y2="422.8" stroke="#8a7a3a" stroke-width="0.7" opacity="0.27"/>
<line x1="881.1" y1="419.2" x2="881.1" y2="430.2" stroke="#45a055" stroke-width="0.7" opacity="0.25"/>
<line x1="794.7" y1="273.2" x2="810.1" y2="273.2" stroke="#45a055" stroke-width="0.7" opacity="0.25"/>
<line x1="780.5" y1="333.7" x2="780.5" y2="377.5" stroke="#45a055" stroke-width="0.7" opacity="0.20"/>
<line x1="835.2" y1="71.3" x2="844.6" y2="71.3" stroke="#45a055" stroke-width="0.7" opacity="0.27"/>
<line x1="853.6" y1="202.2" x2="853.6" y2="209.8" stroke="#8a7a3a" stroke-width="0.7" opacity="0.30"/>
<line x1="912.8" y1="596.8" x2="912.8" y2="638.4" stroke="#45a055" stroke-width="0.7" opacity="0.13"/>
<line x1="880.0" y1="235.8" x2="916.4" y2="235.8" stroke="#45a055" stroke-width="0.7" opacity="0.27"/>
<line x1="868.1" y1="147.9" x2="868.1" y2="172.6" stroke="#8a7a3a" stroke-width="0.7" opacity="0.26"/>
<line x1="813.5" y1="280.6" x2="858.2" y2="280.6" stroke="#45a055" stroke-width="0.7" opacity="0.18"/>
<line x1="987.2" y1="122.8" x2="1020.2" y2="122.8" stroke="#8a7a3a" stroke-width="0.7" opacity="0.19"/>
<line x1="1010.3" y1="372.6" x2="1010.3" y2="398.6" stroke="#45a055" stroke-width="0.7" opacity="0.21"/>
<line x1="828.0" y1="216.7" x2="828.0" y2="236.7" stroke="#45a055" stroke-width="0.7" opacity="0.15"/>
<line x1="949.9" y1="544.2" x2="970.9" y2="544.2" stroke="#45a055" stroke-width="0.7" opacity="0.12"/>
<line x1="985.0" y1="228.8" x2="985.0" y2="260.9" stroke="#8a7a3a" stroke-width="0.7" opacity="0.17"/>
<line x1="861.6" y1="143.0" x2="890.8" y2="143.0" stroke="#45a055" stroke-width="0.7" opacity="0.13"/>
<line x1="811.9" y1="246.4" x2="811.9" y2="272.6" stroke="#8a7a3a" stroke-width="0.7" opacity="0.21"/>
<line x1="840.1" y1="271.0" x2="840.1" y2="309.6" stroke="#8a7a3a" stroke-width="0.7" opacity="0.19"/>
<line x1="864.6" y1="231.9" x2="882.0" y2="231.9" stroke="#8a7a3a" stroke-width="0.7" opacity="0.28"/>
<line x1="919.8" y1="84.2" x2="919.8" y2="109.0" stroke="#45a055" stroke-width="0.7" opacity="0.27"/>
<line x1="972.7" y1="585.4" x2="972.7" y2="627.2" stroke="#45a055" stroke-width="0.7" opacity="0.09"/>
<line x1="905.6" y1="212.0" x2="905.6" y2="232.6" stroke="#8a7a3a" stroke-width="0.7" opacity="0.14"/>
<line x1="780.1" y1="256.6" x2="801.0" y2="256.6" stroke="#8a7a3a" stroke-width="0.7" opacity="0.19"/>
<line x1="832.3" y1="422.0" x2="832.3" y2="435.9" stroke="#45a055" stroke-width="0.7" opacity="0.16"/>
<line x1="850.0" y1="427.4" x2="850.0" y2="468.8" stroke="#45a055" stroke-width="0.7" opacity="0.21"/>
<line x1="884.2" y1="154.2" x2="925.9" y2="154.2" stroke="#8a7a3a" stroke-width="0.7" opacity="0.27"/>
<line x1="788.3" y1="545.8" x2="809.0" y2="545.8" stroke="#8a7a3a" stroke-width="0.7" opacity="0.28"/>
<line x1="881.7" y1="195.3" x2="901.2" y2="195.3" stroke="#8a7a3a" stroke-width="0.7" opacity="0.17"/>
<line x1="907.6" y1="157.1" x2="931.9" y2="157.1" stroke="#8a7a3a" stroke-width="0.7" opacity="0.24"/>
<line x1="1011.8" y1="217.6" x2="1011.8" y2="253.7" stroke="#45a055" stroke-width="0.7" opacity="0.22"/>
<line x1="922.4" y1="246.6" x2="960.7" y2="246.6" stroke="#8a7a3a" stroke-width="0.7" opacity="0.19"/>
<line x1="858.3" y1="545.8" x2="884.1" y2="545.8" stroke="#8a7a3a" stroke-width="0.7" opacity="0.13"/>
<line x1="888.7" y1="283.8" x2="888.7" y2="300.3" stroke="#8a7a3a" stroke-width="0.7" opacity="0.12"/>
<line x1="938.3" y1="140.7" x2="938.3" y2="162.1" stroke="#45a055" stroke-width="0.7" opacity="0.12"/>
<line x1="902.6" y1="509.4" x2="940.7" y2="509.4" stroke="#8a7a3a" stroke-width="0.7" opacity="0.26"/>
<line x1="826.8" y1="62.3" x2="826.8" y2="76.4" stroke="#8a7a3a" stroke-width="0.7" opacity="0.12"/>
<line x1="940.0" y1="578.3" x2="970.2" y2="578.3" stroke="#8a7a3a" stroke-width="0.7" opacity="0.13"/>
<line x1="971.7" y1="176.2" x2="1003.8" y2="176.2" stroke="#8a7a3a" stroke-width="0.7" opacity="0.19"/>
<line x1="819.5" y1="149.6" x2="845.6" y2="149.6" stroke="#45a055" stroke-width="0.7" opacity="0.18"/>
<line x1="991.2" y1="593.5" x2="991.2" y2="611.6" stroke="#8a7a3a" stroke-width="0.7" opacity="0.13"/>
<line x1="893.3" y1="407.6" x2="893.3" y2="429.6" stroke="#8a7a3a" stroke-width="0.7" opacity="0.13"/>
<line x1="770.3" y1="152.3" x2="770.3" y2="173.6" stroke="#8a7a3a" stroke-width="0.7" opacity="0.21"/>
<line x1="854.5" y1="409.7" x2="854.5" y2="423.7" stroke="#45a055" stroke-width="0.7" opacity="0.15"/>
<line x1="908.1" y1="252.4" x2="908.1" y2="290.8" stroke="#45a055" stroke-width="0.7" opacity="0.25"/>
<line x1="789.6" y1="226.2" x2="802.8" y2="226.2" stroke="#45a055" stroke-width="0.7" opacity="0.24"/>
<line x1="882.5" y1="416.3" x2="882.5" y2="432.8" stroke="#8a7a3a" stroke-width="0.7" opacity="0.26"/>
<line x1="868.4" y1="378.9" x2="868.4" y2="423.4" stroke="#45a055" stroke-width="0.7" opacity="0.19"/>
<line x1="798.2" y1="598.4" x2="818.1" y2="598.4" stroke="#45a055" stroke-width="0.7" opacity="0.14"/>
<line x1="864.4" y1="542.8" x2="864.4" y2="555.5" stroke="#45a055" stroke-width="0.7" opacity="0.27"/>
<line x1="838.9" y1="480.3" x2="860.1" y2="480.3" stroke="#8a7a3a" stroke-width="0.7" opacity="0.27"/>
<line x1="961.1" y1="588.6" x2="961.1" y2="615.9" stroke="#45a055" stroke-width="0.7" opacity="0.10"/>
<line x1="874.5" y1="500.3" x2="874.5" y2="540.6" stroke="#8a7a3a" stroke-width="0.7" opacity="0.22"/>
<line x1="788.3" y1="194.2" x2="788.3" y2="205.8" stroke="#8a7a3a" stroke-width="0.7" opacity="0.12"/>
<line x1="829.4" y1="136.5" x2="845.6" y2="136.5" stroke="#45a055" stroke-width="0.7" opacity="0.21"/>
<line x1="796.6" y1="4.3" x2="796.6" y2="10.4" stroke="#8a7a3a" stroke-width="0.7" opacity="0.26"/>
<line x1="885.6" y1="598.3" x2="885.6" y2="623.2" stroke="#8a7a3a" stroke-width="0.7" opacity="0.08"/>
<line x1="850.2" y1="335.9" x2="880.2" y2="335.9" stroke="#8a7a3a" stroke-width="0.7" opacity="0.22"/>
<line x1="830.3" y1="563.3" x2="830.3" y2="586.6" stroke="#45a055" stroke-width="0.7" opacity="0.14"/>
<line x1="803.1" y1="16.1" x2="812.0" y2="16.1" stroke="#8a7a3a" stroke-width="0.7" opacity="0.15"/>
<line x1="762.4" y1="333.4" x2="803.0" y2="333.4" stroke="#45a055" stroke-width="0.7" opacity="0.13"/>
<line x1="1013.1" y1="6.6" x2="1013.1" y2="43.5" stroke="#8a7a3a" stroke-width="0.7" opacity="0.21"/>
<line x1="863.0" y1="481.8" x2="863.0" y2="526.3" stroke="#45a055" stroke-width="0.7" opacity="0.27"/>
<line x1="1006.9" y1="289.3" x2="1047.9" y2="289.3" stroke="#45a055" stroke-width="0.7" opacity="0.27"/>
<line x1="758.5" y1="84.5" x2="758.5" y2="110.2" stroke="#8a7a3a" stroke-width="0.7" opacity="0.18"/>
<line x1="973.3" y1="218.8" x2="990.2" y2="218.8" stroke="#8a7a3a" stroke-width="0.7" opacity="0.23"/>
<line x1="915.2" y1="158.8" x2="923.1" y2="158.8" stroke="#45a055" stroke-width="0.7" opacity="0.16"/>
<line x1="902.4" y1="408.1" x2="914.0" y2="408.1" stroke="#8a7a3a" stroke-width="0.7" opacity="0.15"/>
<line x1="804.9" y1="13.2" x2="814.6" y2="13.2" stroke="#45a055" stroke-width="0.7" opacity="0.19"/>
<line x1="761.6" y1="104.7" x2="761.6" y2="133.3" stroke="#8a7a3a" stroke-width="0.7" opacity="0.13"/>
<line x1="871.3" y1="577.6" x2="904.8" y2="577.6" stroke="#45a055" stroke-width="0.7" opacity="0.08"/>
<line x1="973.8" y1="42.0" x2="973.8" y2="82.3" stroke="#8a7a3a" stroke-width="0.7" opacity="0.19"/>
<line x1="896.7" y1="6.0" x2="896.7" y2="47.6" stroke="#45a055" stroke-width="0.7" opacity="0.25"/>
<line x1="812.9" y1="369.8" x2="812.9" y2="400.3" stroke="#45a055" stroke-width="0.7" opacity="0.28"/>
<line x1="788.5" y1="443.2" x2="812.8" y2="443.2" stroke="#8a7a3a" stroke-width="0.7" opacity="0.25"/>
<line x1="890.4" y1="225.3" x2="932.3" y2="225.3" stroke="#8a7a3a" stroke-width="0.7" opacity="0.22"/>
<line x1="875.7" y1="356.0" x2="875.7" y2="367.9" stroke="#8a7a3a" stroke-width="0.7" opacity="0.23"/>
<line x1="843.9" y1="153.6" x2="868.2" y2="153.6" stroke="#8a7a3a" stroke-width="0.7" opacity="0.23"/>
<line x1="770.1" y1="580.9" x2="770.1" y2="591.2" stroke="#45a055" stroke-width="0.7" opacity="0.13"/>
<line x1="981.2" y1="389.5" x2="981.2" y2="426.6" stroke="#8a7a3a" stroke-width="0.7" opacity="0.29"/>
<line x1="1022.3" y1="38.9" x2="1022.3" y2="54.7" stroke="#8a7a3a" stroke-width="0.7" opacity="0.28"/>
<line x1="877.7" y1="321.8" x2="894.6" y2="321.8" stroke="#45a055" stroke-width="0.7" opacity="0.28"/>
<line x1="775.7" y1="333.0" x2="791.1" y2="333.0" stroke="#8a7a3a" stroke-width="0.7" opacity="0.26"/>
<line x1="985.2" y1="462.5" x2="985.2" y2="499.6" stroke="#45a055" stroke-width="0.7" opacity="0.22"/>
<line x1="973.5" y1="107.1" x2="973.5" y2="150.4" stroke="#45a055" stroke-width="0.7" opacity="0.18"/>
<line x1="979.5" y1="70.4" x2="1018.6" y2="70.4" stroke="#8a7a3a" stroke-width="0.7" opacity="0.15"/>
<line x1="997.7" y1="43.1" x2="1028.2" y2="43.1" stroke="#45a055" stroke-width="0.7" opacity="0.30"/>
<line x1="906.1" y1="596.6" x2="906.1" y2="629.9" stroke="#8a7a3a" stroke-width="0.7" opacity="0.09"/>
<line x1="760.0" y1="0.0" x2="760.0" y2="600.0" stroke="#45a055" stroke-width="0.5" opacity="0.05"/>
<line x1="778.0" y1="0.0" x2="778.0" y2="600.0" stroke="#45a055" stroke-width="0.5" opacity="0.05"/>
<line x1="796.0" y1="0.0" x2="796.0" y2="600.0" stroke="#45a055" stroke-width="0.5" opacity="0.05"/>
<line x1="814.0" y1="0.0" x2="814.0" y2="600.0" stroke="#45a055" stroke-width="0.5" opacity="0.05"/>
<line x1="832.0" y1="0.0" x2="832.0" y2="600.0" stroke="#45a055" stroke-width="0.5" opacity="0.05"/>
<line x1="850.0" y1="0.0" x2="850.0" y2="600.0" stroke="#45a055" stroke-width="0.5" opacity="0.05"/>
<line x1="868.0" y1="0.0" x2="868.0" y2="600.0" stroke="#45a055" stroke-width="0.5" opacity="0.05"/>
<line x1="886.0" y1="0.0" x2="886.0" y2="600.0" stroke="#45a055" stroke-width="0.5" opacity="0.05"/>
<line x1="904.0" y1="0.0" x2="904.0" y2="600.0" stroke="#45a055" stroke-width="0.5" opacity="0.05"/>
<line x1="922.0" y1="0.0" x2="922.0" y2="600.0" stroke="#45a055" stroke-width="0.5" opacity="0.05"/>
<line x1="940.0" y1="0.0" x2="940.0" y2="600.0" stroke="#45a055" stroke-width="0.5" opacity="0.05"/>
<line x1="958.0" y1="0.0" x2="958.0" y2="600.0" stroke="#45a055" stroke-width="0.5" opacity="0.05"/>
<line x1="976.0" y1="0.0" x2="976.0" y2="600.0" stroke="#45a055" stroke-width="0.5" opacity="0.05"/>
<line x1="994.0" y1="0.0" x2="994.0" y2="600.0" stroke="#45a055" stroke-width="0.5" opacity="0.05"/>
<line x1="1012.0" y1="0.0" x2="1012.0" y2="600.0" stroke="#45a055" stroke-width="0.5" opacity="0.05"/>
<line x1="754.0" y1="8.0" x2="1024.0" y2="8.0" stroke="#45a055" stroke-width="0.5" opacity="0.05"/>
<line x1="754.0" y1="26.0" x2="1024.0" y2="26.0" stroke="#45a055" stroke-width="0.5" opacity="0.05"/>
<line x1="754.0" y1="44.0" x2="1024.0" y2="44.0" stroke="#45a055" stroke-width="0.5" opacity="0.05"/>
<line x1="754.0" y1="62.0" x2="1024.0" y2="62.0" stroke="#45a055" stroke-width="0.5" opacity="0.05"/>
<line x1="754.0" y1="80.0" x2="1024.0" y2="80.0" stroke="#45a055" stroke-width="0.5" opacity="0.05"/>
<line x1="754.0" y1="98.0" x2="1024.0" y2="98.0" stroke="#45a055" stroke-width="0.5" opacity="0.05"/>
<line x1="754.0" y1="116.0" x2="1024.0" y2="116.0" stroke="#45a055" stroke-width="0.5" opacity="0.05"/>
<line x1="754.0" y1="134.0" x2="1024.0" y2="134.0" stroke="#45a055" stroke-width="0.5" opacity="0.05"/>
<line x1="754.0" y1="152.0" x2="1024.0" y2="152.0" stroke="#45a055" stroke-width="0.5" opacity="0.05"/>
<line x1="754.0" y1="170.0" x2="1024.0" y2="170.0" stroke="#45a055" stroke-width="0.5" opacity="0.05"/>
<line x1="754.0" y1="188.0" x2="1024.0" y2="188.0" stroke="#45a055" stroke-width="0.5" opacity="0.05"/>
<line x1="754.0" y1="206.0" x2="1024.0" y2="206.0" stroke="#45a055" stroke-width="0.5" opacity="0.05"/>
<line x1="754.0" y1="224.0" x2="1024.0" y2="224.0" stroke="#45a055" stroke-width="0.5" opacity="0.05"/>
<line x1="754.0" y1="242.0" x2="1024.0" y2="242.0" stroke="#45a055" stroke-width="0.5" opacity="0.05"/>
<line x1="754.0" y1="260.0" x2="1024.0" y2="260.0" stroke="#45a055" stroke-width="0.5" opacity="0.05"/>
<line x1="754.0" y1="278.0" x2="1024.0" y2="278.0" stroke="#45a055" stroke-width="0.5" opacity="0.05"/>
<line x1="754.0" y1="296.0" x2="1024.0" y2="296.0" stroke="#45a055" stroke-width="0.5" opacity="0.05"/>
<line x1="754.0" y1="314.0" x2="1024.0" y2="314.0" stroke="#45a055" stroke-width="0.5" opacity="0.05"/>
<line x1="754.0" y1="332.0" x2="1024.0" y2="332.0" stroke="#45a055" stroke-width="0.5" opacity="0.05"/>
<line x1="754.0" y1="350.0" x2="1024.0" y2="350.0" stroke="#45a055" stroke-width="0.5" opacity="0.05"/>
<line x1="754.0" y1="368.0" x2="1024.0" y2="368.0" stroke="#45a055" stroke-width="0.5" opacity="0.05"/>
<line x1="754.0" y1="386.0" x2="1024.0" y2="386.0" stroke="#45a055" stroke-width="0.5" opacity="0.05"/>
<line x1="754.0" y1="404.0" x2="1024.0" y2="404.0" stroke="#45a055" stroke-width="0.5" opacity="0.05"/>
<line x1="754.0" y1="422.0" x2="1024.0" y2="422.0" stroke="#45a055" stroke-width="0.5" opacity="0.05"/>
<line x1="754.0" y1="440.0" x2="1024.0" y2="440.0" stroke="#45a055" stroke-width="0.5" opacity="0.05"/>
<line x1="754.0" y1="458.0" x2="1024.0" y2="458.0" stroke="#45a055" stroke-width="0.5" opacity="0.05"/>
<line x1="754.0" y1="476.0" x2="1024.0" y2="476.0" stroke="#45a055" stroke-width="0.5" opacity="0.05"/>
<line x1="754.0" y1="494.0" x2="1024.0" y2="494.0" stroke="#45a055" stroke-width="0.5" opacity="0.05"/>
<line x1="754.0" y1="512.0" x2="1024.0" y2="512.0" stroke="#45a055" stroke-width="0.5" opacity="0.05"/>
<line x1="754.0" y1="530.0" x2="1024.0" y2="530.0" stroke="#45a055" stroke-width="0.5" opacity="0.05"/>
<line x1="754.0" y1="548.0" x2="1024.0" y2="548.0" stroke="#45a055" stroke-width="0.5" opacity="0.05"/>
<line x1="754.0" y1="566.0" x2="1024.0" y2="566.0" stroke="#45a055" stroke-width="0.5" opacity="0.05"/>
<line x1="754.0" y1="584.0" x2="1024.0" y2="584.0" stroke="#45a055" stroke-width="0.5" opacity="0.05"/>
<defs><radialGradient id="lfade" cx="754" cy="400" r="1" gradientUnits="userSpaceOnUse" gradientTransform="translate(754,400) scale(70,300) translate(-754,-400)"><stop offset="0" stop-color="#033533" stop-opacity="0.75"/><stop offset="0.6" stop-color="#033533" stop-opacity="0.45"/><stop offset="1" stop-color="#033533" stop-opacity="0"/></radialGradient></defs>
<rect x="754" y="100" width="80" height="632" fill="url(#lfade)"/>
</svg>

<!-- WINDOW -->
<div id="win">
  <div id="title"></div>
  <div class="a" style="left:0;top:28px;width:754px;height:1px;background:#3daee9"></div>
  <div class="t" style="left:322.6px;top:7.3px;color:#eff0f1;letter-spacing:0.15px">Home — Dolphin</div>

  <!-- toolbar text -->
  <div class="t" style="left:256.5px;top:40.6px">Find</div>
  <div class="t" style="left:328px;top:40.6px">Preview</div>
  <div class="t" style="left:420.5px;top:40.6px">Split</div>
  <div class="t" style="left:491.5px;top:40.6px;letter-spacing:0.3px">Control</div>

  <!-- sidebar -->
  <div class="a" style="left:6px;top:99px;width:156px;height:22px;background:#3daee9"></div>
  <div class="t hdr" style="left:5.7px;top:76.1px">Places</div>
  <div class="t si" style="left:27.8px;top:102.5px;color:#fcfcfc">Home</div>
  <div class="t si" style="left:27.8px;top:124.5px">Network</div>
  <div class="t si" style="left:27.8px;top:146.5px">Root</div>
  <div class="t si" style="left:27.8px;top:168.5px">Trash</div>
  <div class="t hdr" style="left:5.7px;top:198px">Recently Saved</div>
  <div class="t si" style="left:27.8px;top:224.8px">Today</div>
  <div class="t si" style="left:27.8px;top:246.8px">Yesterday</div>
  <div class="t si" style="left:27.8px;top:268.8px">This Month</div>
  <div class="t si" style="left:27.8px;top:290.8px">Last Month</div>
  <div class="t hdr" style="left:5.7px;top:320px">Search For</div>
  <div class="t si" style="left:27.8px;top:347.2px">Documents</div>
  <div class="t si" style="left:27.8px;top:369.2px">Images</div>
  <div class="t si" style="left:27.8px;top:391.2px">Audio Files</div>
  <div class="t si" style="left:27.8px;top:413.4px">Videos</div>
  <div class="t hdr" style="left:5.7px;top:442px">Devices</div>
  <div class="t" style="left:27.8px;top:469.2px">8.0 GiB Hard Drive</div>
  <div class="a" style="left:0;top:488px;width:162px;height:22px;overflow:hidden">
    <div class="t si" style="left:27.8px;top:4.2px;letter-spacing:-0.2px">openSUSE-Leap-15.0-DVD</div>
  </div>
  <div class="a" style="left:169px;top:80px;width:6px;height:418px;border-radius:3px;background:#8a8b8c"></div>
  <div class="a" style="left:9px;top:514px;width:90px;height:6px;border-radius:3px;background:#8a8b8c"></div>

  <!-- breadcrumb -->
  <div class="t" style="left:205.6px;top:77.2px;font-weight:bold">Home</div>

  <!-- view frame -->
  <div class="a" style="left:186px;top:102px;width:563px;height:396px;background:#fcfcfc;border:1px solid #3daee9;border-radius:2px"></div>

  <!-- labels -->
  <div class="t lbl" style="left:200.5px;top:149.0px">bin</div>
  <div class="t lbl" style="left:335px;top:149.0px">data</div>
  <div class="t lbl" style="left:469.6px;top:149.0px">Desktop</div>
  <div class="t lbl" style="left:604.2px;top:149.0px">Documents</div>
  <div class="t lbl" style="left:200.5px;top:213.0px">Downloads</div>
  <div class="t lbl" style="left:335px;top:213.0px">Music</div>
  <div class="t lbl" style="left:469.6px;top:213.0px">Pictures</div>
  <div class="t lbl" style="left:604.2px;top:213.0px">Public</div>
  <div class="t lbl" style="left:200.5px;top:277.0px">Templates</div>
  <div class="t lbl" style="left:335px;top:277.0px">Videos</div>
  <div class="t lbl" style="left:469.6px;top:277.0px">test.data</div>
  <div class="a" style="left:253px;top:166px;width:23px;height:1.5px;background:#3daee9"></div>

  <div class="a" style="left:0;top:532px;width:754px;height:1px;background:#fafafa"></div>
  <!-- status bar -->
  <div class="t" style="left:187px;top:507.3px;letter-spacing:-0.12px">10 Folders, 1 File (2.9 MiB)</div>
  <div class="a" style="left:377px;top:511px;width:181px;height:6px;border-radius:3px;background:#b1b2b3"></div>
  <div class="a" style="left:377px;top:511px;width:30px;height:6px;border-radius:3px;background:#3daee9"></div>
  <div class="a" style="left:397px;top:505px;width:18px;height:18px;border-radius:50%;background:#eff0f1;border:1px solid #9a9b9c"></div>
  <div class="a" style="left:566px;top:511px;width:105px;height:6px;border-radius:3px;background:#b1b2b3"></div>
  <div class="a" style="left:566px;top:511px;width:84px;height:6px;border-radius:3px;background:#3daee9"></div>
  <div class="t" style="left:676px;top:507.1px;letter-spacing:-0.1px">1.6 GiB free</div>
</div>

<!-- PANEL -->
<div id="panel" class="a" style="left:0;top:732px;width:1024px;height:36px;background:#d7dadc">
  <div class="a" style="left:64px;top:2px;width:257px;height:3px;background:#6cbde9"></div>
  <div class="t" style="left:96.5px;top:11.7px;letter-spacing:0.2px">Home — Dolphin</div>
  <div class="t" style="left:892px;top:6px;font-size:22.7px;line-height:26px;transform:scaleY(1.08);transform-origin:0 20.9px">10:46 PM</div>
</div>

<svg id="ic" width="1024" height="768" style="left:0;top:0;position:absolute" viewBox="0 0 1024 768">
<defs>
  <linearGradient id="gfr" x1="0" y1="0" x2="0" y2="1"><stop offset="0" stop-color="#70c3f0"/><stop offset="1" stop-color="#3eadea"/></linearGradient>
  <symbol id="folder" viewBox="0 0 32 32" width="32" height="32">
    <path d="M2,3 H14 L16,5 H30 V14 H2 Z" fill="#147db9"/>
    <path d="M1,10 H11 L13,8 H31 V29 H1 Z" fill="url(#gfr)"/>
    <rect x="1" y="28" width="30" height="1" fill="#1b82c2"/>
  </symbol>
  <linearGradient id="gdol" x1="0" y1="0" x2="1" y2="1"><stop offset="0" stop-color="#5db3f5"/><stop offset="1" stop-color="#1673d3"/></linearGradient>
  <symbol id="dolph" viewBox="0 0 18 16" width="18" height="16">
    <path d="M0,0 H8 L9,1 H18 V6 H0 Z" fill="#1a69ad"/>
    <rect x="1" y="3" width="16" height="3" fill="#f6f8fa"/>
    <path d="M0,6 H6 L7,5 H18 V16 H0 Z" fill="url(#gdol)"/>
    <rect x="0" y="15" width="18" height="1" fill="#1560b0"/>
  </symbol>
  <symbol id="cal" viewBox="0 0 12 12" width="12" height="12">
    <path d="M0.5,1.5 H11.5 V11.5 H0.5 Z" fill="none" stroke="#232627" stroke-width="1"/>
    <rect x="0" y="1" width="12" height="2.5" fill="#232627"/>
    <rect x="2" y="0" width="1.5" height="2" fill="#232627"/>
    <rect x="8.5" y="0" width="1.5" height="2" fill="#232627"/>
  </symbol>
</defs>

<!-- title bar icons -->
<use href="#dolph" x="5" y="6"/>
<g transform="translate(38.5,13.5) rotate(45)" fill="#fcfcfc">
  <rect x="-2.5" y="-6" width="5" height="6.5" rx="0.5"/>
  <rect x="-4.5" y="0" width="9" height="1.6"/>
  <rect x="-0.6" y="1" width="1.2" height="6"/>
</g>
<polyline points="682.5,11.5 688,17 693.5,11.5" fill="none" stroke="#f4f5f6" stroke-width="1.4"/>
<polyline points="706.5,16.5 712,11 717.5,16.5" fill="none" stroke="#f4f5f6" stroke-width="1.4"/>
<circle cx="736" cy="14" r="9" fill="#fcfcfc"/>
<path d="M731.8,9.8 L740.2,18.2 M740.2,9.8 L731.8,18.2" stroke="#31363b" stroke-width="1.1"/>

<!-- toolbar -->
<polyline points="22.5,40.5 15,48 22.5,55.5" fill="none" stroke="#8c8e90" stroke-width="1"/>
<polyline points="49.5,40.5 57,48 49.5,55.5" fill="none" stroke="#8c8e90" stroke-width="1"/>
<polyline points="79.2,50.5 87,42.8 94.8,50.5" fill="none" stroke="#31363b" stroke-width="1.5"/>
<rect x="108" y="31" width="1" height="34" fill="#bcbebf"/>
<rect x="113" y="32" width="32" height="32" rx="3" fill="#c8c9ca"/>
<g transform="translate(121,40)">
  <rect x="0.5" y="0.5" width="6" height="6" fill="#d3d4d5" stroke="#232627"/>
  <rect x="9" y="0" width="7" height="7" fill="#232627"/>
  <rect x="0" y="9" width="7" height="7" fill="#232627"/>
  <rect x="9.5" y="9.5" width="6" height="6" fill="#d3d4d5" stroke="#232627"/>
</g>
<g transform="translate(155,40)">
  <rect x="0.5" y="0.5" width="6" height="6" fill="none" stroke="#232627"/>
  <rect x="9" y="1" width="7" height="1" fill="#232627"/>
  <rect x="9" y="5" width="7" height="1" fill="#232627"/>
  <rect x="0" y="9" width="7" height="7" fill="#232627"/>
  <rect x="9" y="10" width="4" height="1" fill="#232627"/>
  <rect x="9" y="14" width="4" height="1" fill="#232627"/>
</g>
<g transform="translate(189,40)">
  <rect x="0.5" y="0.5" width="6" height="6" fill="none" stroke="#232627"/>
  <rect x="9.5" y="0.5" width="6" height="6" fill="none" stroke="#232627"/>
  <rect x="7" y="3" width="2" height="1" fill="#232627"/>
  <rect x="6" y="7" width="1" height="6" fill="#232627"/>
  <rect x="6" y="12" width="3" height="1" fill="#232627"/>
  <rect x="9" y="9" width="7" height="7" fill="#232627"/>
</g>
<rect x="218" y="31" width="1" height="34" fill="#bcbebf"/>
<g transform="translate(234,40)" fill="none" stroke="#31363b">
  <circle cx="5.5" cy="5.5" r="5" stroke-width="1.1"/>
  <path d="M9,9 L15.5,15.5" stroke-width="1.2"/>
</g>
<g transform="translate(305,40)" fill="none" stroke="#232627">
  <rect x="0.5" y="0.5" width="15" height="15"/>
  <circle cx="4.5" cy="4" r="1.5"/>
  <polyline points="2,12.5 6,8.5 9,11 13,7.5 15,9.5"/>
</g>
<g transform="translate(398,40)" fill="#232627">
  <path d="M0.5,1.5 H15.5 V15.5 H0.5 Z" fill="none" stroke="#232627"/>
  <rect x="0" y="0" width="16" height="2.5"/>
  <rect x="5" y="2" width="1" height="13"/>
  <rect x="8" y="9" width="5" height="1"/>
  <rect x="10" y="7" width="1" height="5"/>
</g>
<g transform="translate(469,42)" fill="#232627">
  <rect x="0" y="0" width="16" height="2"/>
  <rect x="0" y="5" width="16" height="2"/>
  <rect x="0" y="10" width="16" height="2"/>
</g>

<!-- breadcrumb chevron -->
<polyline points="191,79.5 195.5,84 191,88.5" fill="none" stroke="#4d5257" stroke-width="1.1"/>

<!-- sidebar icons -->
<g fill="#fcfcfc">
  <path d="M9.8,109.9 L16,103.7 L18.2,105.9" fill="none" stroke="#fcfcfc" stroke-width="1.3"/>
  <rect x="19" y="104" width="1.2" height="3"/>
  <rect x="20" y="109" width="2" height="1.2"/>
  <rect x="11" y="109.5" width="1" height="5.5"/>
  <rect x="20" y="109" width="1" height="6"/>
  <rect x="11" y="114" width="10" height="1"/>
  <rect x="15" y="111" width="2" height="4"/>
</g>
<g transform="translate(10,125)">
  <rect x="0" y="0" width="12" height="12" fill="#232627"/>
  <rect x="0" y="4" width="12" height="1" fill="#eff0f1"/>
  <rect x="0" y="8" width="12" height="1" fill="#eff0f1"/>
  <rect x="9" y="1" width="2" height="1" fill="#eff0f1"/>
  <rect x="9" y="5" width="2" height="1" fill="#eff0f1"/>
  <rect x="9" y="10" width="2" height="1" fill="#eff0f1"/>
</g>
<g transform="translate(10,147)">
  <path d="M0.5,11.5 V0.5 H5 L6.5,2 H11.5 V11.5 Z" fill="none" stroke="#da4453"/>
  <rect x="0" y="2" width="12" height="2" fill="#da4453"/>
</g>
<g transform="translate(10,169)" fill="none" stroke="#232627">
  <path d="M0,1.5 H12"/>
  <path d="M4,1.5 V0.5 H8 V1.5"/>
  <path d="M1.5,1.5 V11.5 H10.5 V1.5"/>
  <path d="M4.5,3.5 V9 M7.5,3.5 V9"/>
</g>
<use href="#cal" x="10" y="225"/>
<use href="#cal" x="10" y="247"/>
<use href="#cal" x="10" y="269"/>
<use href="#cal" x="10" y="291"/>
<g fill="#232627">
  <rect x="12" y="229.5" width="2" height="2"/><rect x="15" y="229.5" width="2" height="2"/><rect x="18" y="229.5" width="2" height="2"/>
  <rect x="12" y="232.5" width="2" height="2"/><rect x="15" y="232.5" width="2" height="2"/><rect x="18" y="232.5" width="2" height="2"/>
  <rect x="12" y="251.5" width="2" height="2"/><rect x="15" y="251.5" width="2" height="2"/><rect x="18" y="251.5" width="2" height="2"/>
  <rect x="12" y="254.5" width="2" height="2"/><rect x="15" y="254.5" width="2" height="2"/><rect x="18" y="254.5" width="2" height="2"/>
</g>
<g fill="#1fa65a">
  <rect x="12" y="273.5" width="2" height="2"/><rect x="15" y="273.5" width="2" height="2"/><rect x="18" y="273.5" width="2" height="2"/>
  <rect x="12" y="276.5" width="2" height="2"/><rect x="15" y="276.5" width="2" height="2"/><rect x="18" y="276.5" width="2" height="2"/>
  <rect x="12" y="295.5" width="2" height="2"/><rect x="15" y="295.5" width="2" height="2"/><rect x="18" y="295.5" width="2" height="2"/>
  <rect x="12" y="298.5" width="2" height="2"/><rect x="15" y="298.5" width="2" height="2"/><rect x="18" y="298.5" width="2" height="2"/>
</g>
<g fill="#232627">
  <rect x="10" y="348" width="12" height="1"/>
  <rect x="10" y="350.5" width="10" height="1"/>
  <rect x="10" y="353" width="7" height="1"/>
  <rect x="10" y="355.5" width="12" height="1"/>
  <rect x="10" y="358" width="9" height="1"/>
</g>
<g transform="translate(10,369)">
  <rect x="0.5" y="0.5" width="11" height="11" fill="none" stroke="#232627"/>
  <circle cx="3.5" cy="3.5" r="1.3" fill="#232627"/>
  <path d="M1,10.5 L4.5,7 L6,8.5 L8.5,6 L11,10.5 Z" fill="#232627"/>
</g>
<g transform="translate(10,391)" fill="#232627">
  <rect x="3.5" y="0" width="8.5" height="2"/>
  <rect x="3.5" y="0" width="1.2" height="10"/>
  <rect x="10.8" y="0" width="1.2" height="9"/>
  <circle cx="2.3" cy="10" r="2.2"/>
  <circle cx="9.6" cy="9" r="2.2"/>
</g>
<g transform="translate(10,413)">
  <rect x="0" y="0" width="12" height="12" fill="#232627"/>
  <rect x="3" y="1.5" width="6" height="3.5" fill="#eff0f1"/>
  <rect x="3" y="7" width="6" height="3.5" fill="#eff0f1"/>
  <rect x="1" y="2" width="1" height="1" fill="#eff0f1"/><rect x="1" y="5.5" width="1" height="1" fill="#eff0f1"/><rect x="1" y="9" width="1" height="1" fill="#eff0f1"/>
  <rect x="10" y="2" width="1" height="1" fill="#eff0f1"/><rect x="10" y="5.5" width="1" height="1" fill="#eff0f1"/><rect x="10" y="9" width="1" height="1" fill="#eff0f1"/>
</g>
<g transform="translate(10,469)">
  <rect x="0.5" y="0.5" width="11" height="11" fill="none" stroke="#232627"/>
  <rect x="2.5" y="2.5" width="7" height="5" fill="none" stroke="#232627"/>
  <rect x="7" y="9" width="3" height="1" fill="#232627"/>
  <rect x="0" y="4" width="8" height="8" fill="#20a85b"/>
  <path d="M2,8 L4,6 H6 V10 H4 Z" fill="#fcfcfc"/>
</g>
<g transform="translate(10,491)">
  <path d="M1.5,5 A5,4.5 0 0 1 11,4.5 V11.5 H8" fill="none" stroke="#232627" stroke-width="1.1"/>
  <rect x="0" y="4" width="8" height="8" fill="#f67400"/>
  <path d="M1.5,10.5 L6.5,5" stroke="#fcfcfc" stroke-width="1.5"/>
</g>

<!-- folder icons -->
<use href="#folder" x="250" y="113"/>
<use href="#folder" x="384" y="113"/>
<use href="#folder" x="653" y="113"/>
<use href="#folder" x="250" y="177"/>
<use href="#folder" x="384" y="177"/>
<use href="#folder" x="519" y="177"/>
<use href="#folder" x="653" y="177"/>
<use href="#folder" x="250" y="241"/>
<use href="#folder" x="384" y="241"/>
<g fill="#1a72a8" stroke="#1a72a8">
  <!-- documents emblem -->
  <path d="M665.5,126.5 H672.5 V133 L670,135.5 H665.5 Z" fill="none" stroke-width="1"/>
  <!-- downloads -->
  <path d="M264.5,190.5 H267.5 V194.5 H269.5 L266,198 L262.5,194.5 H264.5 Z" fill="none" stroke-width="1"/>
  <path d="M261.5,198 V199.5 H270.5 V198" fill="none" stroke-width="1.2"/>
  <!-- music -->
  <rect x="398.5" y="190" width="6.5" height="1.5" stroke="none"/>
  <rect x="398.5" y="190" width="1.2" height="8" stroke="none"/>
  <rect x="403.8" y="190" width="1.2" height="7" stroke="none"/>
  <circle cx="397" cy="198" r="1.8" stroke="none"/>
  <circle cx="402.5" cy="197" r="1.8" stroke="none"/>
  <!-- pictures -->
  <rect x="530.5" y="190.5" width="9" height="9" fill="none" stroke-width="1"/>
  <circle cx="533" cy="193" r="1" stroke="none"/>
  <path d="M532,198.5 L534,196.5 L535,197.5 L537,195.5 L539,198.5 Z" stroke="none"/>
  <!-- videos -->
  <rect x="396" y="254" width="10" height="10" stroke="none"/>
</g>
<g fill="#7cc6ee">
  <rect x="398.5" y="255" width="5" height="3.5"/><rect x="398.5" y="259.5" width="5" height="3.5"/>
  <rect x="397" y="255" width="0.8" height="0.8"/><rect x="397" y="257" width="0.8" height="0.8"/><rect x="397" y="260" width="0.8" height="0.8"/><rect x="397" y="262" width="0.8" height="0.8"/>
  <rect x="404.2" y="255" width="0.8" height="0.8"/><rect x="404.2" y="257" width="0.8" height="0.8"/><rect x="404.2" y="260" width="0.8" height="0.8"/><rect x="404.2" y="262" width="0.8" height="0.8"/>
</g>
<!-- desktop icon -->
<defs>
  <linearGradient id="gdt1" x1="0" y1="1" x2="1" y2="0"><stop offset="0" stop-color="#2b8ab8"/><stop offset="1" stop-color="#4ee0c4"/></linearGradient>
  <linearGradient id="gdt2" x1="0" y1="1" x2="1" y2="0"><stop offset="0" stop-color="#ffc27a"/><stop offset="1" stop-color="#ffa02a"/></linearGradient>
  <linearGradient id="gor" x1="0" y1="0" x2="0" y2="1"><stop offset="0" stop-color="#f39262"/><stop offset="1" stop-color="#ee7838"/></linearGradient>
</defs>
<g transform="translate(519,115)">
  <rect x="0" y="0" width="32" height="24" fill="url(#gdt1)"/>
  <path d="M32,0 V24 H20 L11,16 Z" fill="url(#gdt2)"/>
  <path d="M0,24 L11,16 L20,24 Z" fill="#3f5052"/>
  <rect x="0" y="24" width="32" height="4" fill="#dde1e3"/>
  <path d="M22,24 H32 V28 H26 Z" fill="#fde9d2"/>
  <rect x="2.5" y="25.5" width="1.5" height="1" fill="#31363b"/>
  <rect x="29" y="25.5" width="1.5" height="1.5" fill="#31363b"/>
</g>
<!-- test.data -->
<g transform="translate(523,247)">
  <rect x="0" y="0" width="24" height="24" fill="url(#gor)"/>
  <rect x="0" y="23" width="24" height="1" fill="#c95d25"/>
  <path d="M11.5,1 L12.5,2 L11.5,3 L12.5,4 L11.5,5 L12.5,6 L11.5,7 L12.5,8" fill="none" stroke="#fdf3ec" stroke-width="0.9"/>
</g>

<!-- panel -->
<g>
  <circle cx="18" cy="750" r="14.8" fill="none" stroke="#232627" stroke-width="2.3"/>
  <path d="M3.5,745 C4.5,742 6,740.5 8,740 L10.5,741.5 C14,739.5 22,739.8 27,743 C29.5,745 30.2,748.5 29.8,752 C27,756 22,758 15,758.8 C9,759 5,757.5 3.5,754 Z" fill="#232627"/>
  <circle cx="22" cy="747.6" r="3.6" fill="none" stroke="#d7dadc" stroke-width="1.5"/>
  <circle cx="22.2" cy="747" r="1.1" fill="#d7dadc"/>
  <path d="M12.8,749.8 C16,753 22,754.8 29,753.6" fill="none" stroke="#d7dadc" stroke-width="1.7"/>
</g>
<rect x="38" y="734" width="20" height="15" fill="#7ec2e7"/>
<rect x="38.5" y="734.5" width="14.5" height="9" fill="#5398c0" stroke="#3e86b0" stroke-width="1"/>
<rect x="38" y="750" width="20" height="15" fill="#c7cbce"/>
<use href="#dolph" x="70" y="741" width="20" height="18"/>
<g transform="translate(790,742)">
  <rect x="0.5" y="1.5" width="14" height="14" fill="none" stroke="#232627"/>
  <rect x="2.5" y="0" width="10" height="3.5" fill="#232627"/>
  <rect x="3" y="6" width="9" height="1" fill="#232627"/>
  <rect x="3" y="9" width="7" height="1" fill="#232627"/>
  <rect x="3" y="12" width="3" height="1" fill="#232627"/>
</g>
<g transform="translate(819,742)">
  <rect x="1" y="0" width="8" height="7.5" fill="#232627"/>
  <rect x="3" y="2" width="4" height="4" fill="#d7dadc"/>
  <rect x="4" y="3" width="2" height="2" fill="#232627"/>
  <rect x="0.5" y="7.5" width="9" height="8" fill="#eff0f1" stroke="#232627"/>
  <rect x="2" y="12" width="6" height="1" fill="#232627"/>
  <rect x="4" y="9.5" width="2" height="0.8" fill="#232627"/>
</g>
<g>
  <rect x="842" y="747.5" width="2" height="5" fill="#232627"/>
  <path d="M844.5,747 L851,742.5 V757.5 L844.5,753 Z" fill="#232627"/>
  <rect x="852" y="749" width="6" height="2" fill="#da4453"/>
</g>
<path d="M870,753 L876,747 L882,753 Z" fill="#31363b"/>
<g fill="#7a7f84">
  <rect x="1001" y="745" width="12" height="1.6"/>
  <rect x="1001" y="749.3" width="12" height="1.6"/>
  <rect x="1001" y="753.6" width="12" height="1.6"/>
</g>
</svg>
</body></html>
